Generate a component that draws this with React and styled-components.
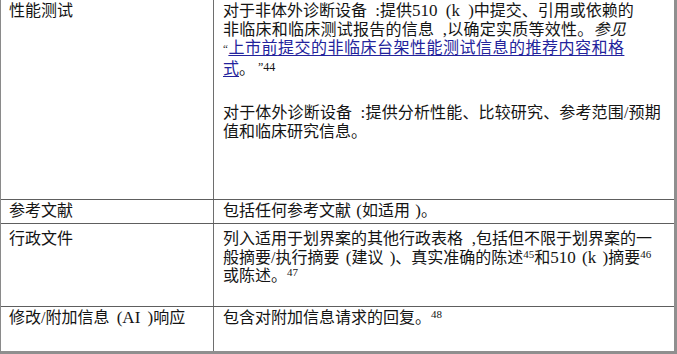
import React from "react";
import styled, { createGlobalStyle } from "styled-components";

const GlobalStyle = createGlobalStyle`
    html, body {
        margin: 0;
        padding: 0;
        background: #FFFFFF;
    }
    body {
        font-family: "Liberation Serif", "Noto Sans CJK SC", serif;
        color: #141414;
    }
`

function App() {
    return (
        <>
            <GlobalStyle />
            <Table>
                <Row $height={200}>
                    <Label $pad={2}>性能测试</Label>
                    <Content $pad={2}>
                        <P>
                            <Line>对于非体外诊断设备<Lat> :</Lat>提供<Lat>510 (k )</Lat>中提交、引用或依赖的</Line>
                            <Line $ls={0.25}>非临床和临床测试报告的信息<Lat> ,</Lat>以确定实质等效性。<Em>参见</Em></Line>
                            <Line $ls={0.5}><Quote>“</Quote><Link href="#">上市前</Link><Link href="#">提交的非临床台架性能测试信息的推荐内容和格</Link></Line>
                            <Line><Link href="#">式</Link>。<Note> ”44</Note></Line>
                        </P>
                        <P $gap={26}>
                            <Line $ls={0.15}>对于体外诊断设备<Lat> :</Lat>提供分析性能、比较研究、参考范围/预期</Line>
                            <Line>值和临床研究信息。</Line>
                        </P>
                    </Content>
                </Row>
                <Row $height={24}>
                    <Label $pad={2}>参考文献</Label>
                    <Content $pad={2}>包括任何参考文献<Lat $ws={1}> (</Lat>如适用<Lat $ws={1}> )</Lat>。</Content>
                </Row>
                <Row $height={83}>
                    <Label $pad={6}>行政文件</Label>
                    <Content $pad={6}>
                        <Line>列入适用于划界案的其他行政表格<Lat $ws={4.5}> ,</Lat>包括但不限于划界案的一</Line>
                        <Line>般摘要/执行摘要<Lat $ws={2}> (</Lat>建议<Lat $ws={2}> )</Lat>、真实准确的陈述<Sup>45</Sup>和<Lat $ws={2}>510 (k )</Lat>摘要<Sup>46</Sup></Line>
                        <Line>或陈述。<Sup>47</Sup></Line>
                    </Content>
                </Row>
                <Row $height={44} $last>
                    <Label $pad={2}>修改/附加信息<Lat $ws={3}> (AI )</Lat>响应</Label>
                    <Content $pad={2}>包含对附加信息请求的回复。<Sup>48</Sup></Content>
                </Row>
            </Table>
        </>
    )
}

export default App

const Table = styled.div`
    width: 677px;
    box-sizing: border-box;
    border-left: 1px solid #8a8a8a;
    border-right: 3px solid #8f8f8f;
    border-bottom: 3px solid #8f8f8f;
    display: flex;
    flex-direction: column;
`

const Row = styled.div`
    display: grid;
    grid-template-columns: 213px 1fr;
    height: ${(p) => p.$height}px;
    box-sizing: border-box;
    border-bottom: ${(p) => (p.$last ? "none" : "1px solid #5e5e5e")};
`

const Label = styled.div`
    padding: ${(p) => p.$pad}px 0 0 8px;
    font-size: 16px;
    line-height: 18.5px;
    border-right: 1px solid #6e6e6e;
    white-space: nowrap;
`

const Content = styled.div`
    padding: ${(p) => p.$pad}px 0 0 9px;
    font-size: 16px;
    line-height: 18.5px;
    white-space: nowrap;
`

const P = styled.p`
    margin: ${(p) => p.$gap || 0}px 0 0 0;
`

const Line = styled.span`
    display: block;
    letter-spacing: ${(p) => p.$ls || 0}px;
`

const Lat = styled.span`
    font-size: 17px;
    word-spacing: ${(p) => (p.$ws ?? 4)}px;
`

const Em = styled.em`
    font-style: italic;
`

const Quote = styled.span`
    font-size: 11px;
    vertical-align: top;
`

const Link = styled.a`
    color: #23239c;
    text-decoration: underline;
    text-underline-offset: 2px;
`

const Note = styled.span`
    font-size: 12px;
    vertical-align: 3px;
`

const Sup = styled.sup`
    font-size: 11px;
    line-height: 0;
    vertical-align: 5px;
`
